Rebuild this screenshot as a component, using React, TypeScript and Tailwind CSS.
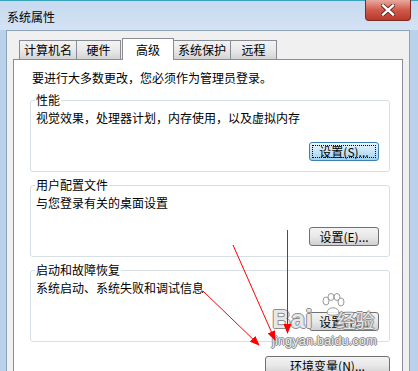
import React from "react";

const font = "font-['Noto_Sans_CJK_SC','Liberation_Sans',sans-serif]";

function Tab({ label, w, selected }: { label: string; w: string; selected?: boolean }) {
  if (selected) {
    return (
      <div
        className={`relative z-10 ml-px -mb-px h-[22px] ${w} border border-b-0 border-[#898c95] bg-white flex items-start justify-center pt-[3px]`}
      >
        {label}
      </div>
    );
  }
  return (
    <div
      className={`-ml-px first:ml-0 h-[19px] ${w} border border-b-0 border-[#898c95] bg-gradient-to-b from-[#f3f3f3] via-[#e9e9e9] to-[#d4d4d4] flex items-center justify-center`}
    >
      {label}
    </div>
  );
}

function Button({ children, w, isDefault }: { children: React.ReactNode; w: string; isDefault?: boolean }) {
  if (isDefault) {
    return (
      <div
        className={`${w} h-[19px] rounded-[3px] border border-[#3c7fb1] bg-gradient-to-b from-[#e8f5fc] via-[#c4e5f6] to-[#9fd3f0] p-[2px] flex`}
      >
        <div className="flex-1 border border-dotted border-black flex items-center justify-center text-[12px] leading-[13px]">
          {children}
        </div>
      </div>
    );
  }
  return (
    <div
      className={`${w} h-[19px] rounded-[3px] border border-[#707070] bg-gradient-to-b from-[#f3f3f3] via-[#e8e8e8] to-[#d0d0d0] flex items-center justify-center text-[12px] leading-[13px]`}
    >
      {children}
    </div>
  );
}

function Group({ title, text, button }: { title: string; text: string; button: React.ReactNode }) {
  return (
    <div className="relative h-[72px] rounded-[3px] border border-[#d5dfe5] flex flex-col">
      <span className="absolute -top-[8px] left-[4px] px-px bg-white leading-[14px]">{title}</span>
      <div className="pl-[5px] pt-[9px]">{text}</div>
      <div className="mt-[16px] mr-[10px] self-end">{button}</div>
    </div>
  );
}

export default function App() {
  return (
    <div
      className={`relative w-[418px] h-[371px] overflow-hidden bg-[#bad1eb] flex flex-col text-[12px] leading-[16px] text-black ${font}`}
    >
      {/* title bar */}
      <div className="h-[30px] shrink-0 border-t border-[#37a3bd] bg-gradient-to-b from-[#c6d9ef] to-[#d4e3f4] flex items-start">
        <span className="ml-[7px] mt-[8px] text-[12px] leading-[16px]">系统属性</span>
        <div className="ml-auto mr-[7px] -mt-px w-[46px] h-[21px] rounded-b-[4px] border border-t-0 border-[#7d2a22] bg-gradient-to-b from-[#e8a99f] via-[#cf5a4c] to-[#b8392c] flex items-center justify-center">
          <svg width="14" height="12" viewBox="0 0 14 12">
            <path d="M2 1.5 L12 10.5 M12 1.5 L2 10.5" stroke="#5a1a14" strokeWidth="4" strokeLinecap="square" />
            <path d="M2 1.5 L12 10.5 M12 1.5 L2 10.5" stroke="#ffffff" strokeWidth="2.4" strokeLinecap="square" />
          </svg>
        </div>
      </div>

      {/* dialog body */}
      <div className="flex-1 ml-[6px] mr-[8px] border border-b-0 border-[#8ea3ba] bg-[#f0f0f0] flex flex-col">
        <div className="mt-[7px] h-[21px] pl-[12px] flex items-end">
          <Tab label="计算机名" w="w-[58px]" />
          <Tab label="硬件" w="w-[45px]" />
          <Tab label="高级" w="w-[52px]" selected />
          <Tab label="系统保护" w="w-[58px]" />
          <Tab label="远程" w="w-[47px]" />
        </div>

        <div className="flex-1 mx-[6px] border border-b-0 border-[#898c95] bg-white pt-[10px] pl-[16px] pr-[12px] flex flex-col">
          <div className="pl-[2px]">要进行大多数更改，您必须作为管理员登录。</div>

          <div className="mt-[14px] flex flex-col gap-[13px]">
            <Group
              title="性能"
              text="视觉效果，处理器计划，内存使用，以及虚拟内存"
              button={
                <Button w="w-[70px]" isDefault>
                  设置(S)...
                </Button>
              }
            />
            <Group
              title="用户配置文件"
              text="与您登录有关的桌面设置"
              button={<Button w="w-[70px]">设置(E)...</Button>}
            />
            <Group
              title="启动和故障恢复"
              text="系统启动、系统失败和调试信息"
              button={<Button w="w-[70px]">设置(T)...</Button>}
            />
          </div>

          <div className="mt-[14px] self-end">
            <Button w="w-[125px]">环境变量(N)...</Button>
          </div>
        </div>
      </div>

      {/* watermark */}
      <div className="absolute left-[272px] top-[293px] pointer-events-none flex flex-col text-[#f4f4f4]/90 [text-shadow:1px_0_#8c8c8c,-1px_0_#8c8c8c,0_1px_#8c8c8c,0_-1px_#8c8c8c]">
        <div className="relative flex items-end h-[40px]">
          <svg className="absolute left-[48px] top-0" width="26" height="24" viewBox="0 0 26 24">
            <g fill="#ffffff" fillOpacity="0.85" stroke="#999999" strokeWidth="1">
              <ellipse cx="6" cy="8" rx="3" ry="4" />
              <ellipse cx="11" cy="4" rx="3" ry="3.5" />
              <ellipse cx="17" cy="4" rx="3" ry="3.5" />
              <ellipse cx="21" cy="9" rx="3" ry="4" />
              <path d="M7 20 C7 13 19 13 19 20 C19 23 7 23 7 20 Z" />
            </g>
          </svg>
          <span className="text-[26px] leading-[28px] font-bold font-['Liberation_Sans',sans-serif]">Bai</span>
          <span className="ml-[24px] text-[19px] leading-[26px]">经验</span>
        </div>
        <span className="mt-px text-[13px] leading-[14px] font-['Liberation_Sans',sans-serif]">jingyan.baidu.com</span>
      </div>

      {/* annotation arrows */}
      <svg className="absolute inset-0 pointer-events-none" width="418" height="371" viewBox="0 0 418 371">
        <defs>
          <marker id="ah" markerWidth="10" markerHeight="8" refX="9" refY="4" orient="auto" markerUnits="userSpaceOnUse">
            <path d="M0,0 L10,4 L0,8 z" fill="#ff0000" />
          </marker>
        </defs>
        <line x1="233" y1="245" x2="275" y2="340" stroke="#ff0000" strokeWidth="1" markerEnd="url(#ah)" />
        <line x1="287.5" y1="230" x2="287.5" y2="333" stroke="#ff0000" strokeWidth="1" markerEnd="url(#ah)" />
        <line x1="203" y1="291" x2="259" y2="345" stroke="#ff0000" strokeWidth="1" markerEnd="url(#ah)" />
      </svg>
    </div>
  );
}
